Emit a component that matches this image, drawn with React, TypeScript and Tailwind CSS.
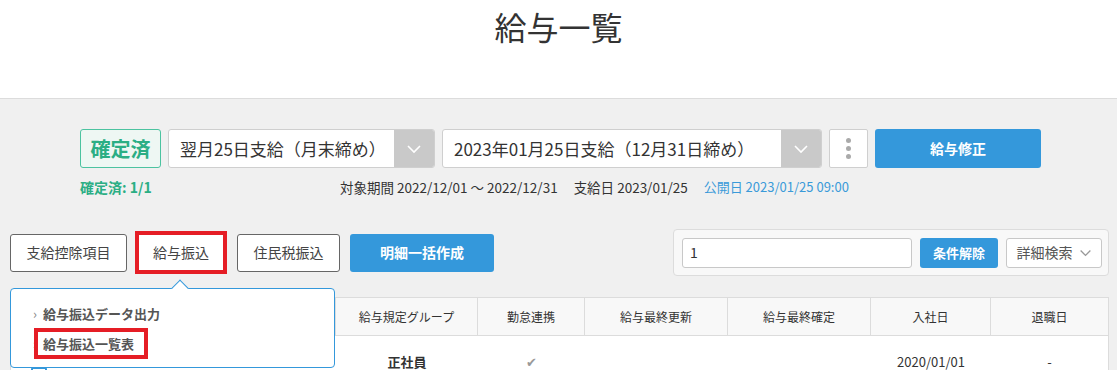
import React from 'react';

const font = { fontFamily: '"Noto Sans CJK JP", "Noto Sans", sans-serif' };

const Chevron = ({ className = '' }: { className?: string }) => (
  <svg width="16" height="10" viewBox="0 0 16 10" className={className}>
    <path d="M2 2 L8 8 L14 2" fill="none" stroke="currentColor" strokeWidth="1.6" />
  </svg>
);

const SelectBox = ({ label, width }: { label: string; width: string }) => (
  <div className={`flex h-[39px] ${width} bg-white border border-[#cfcfcf] rounded-[3px] overflow-hidden`}>
    <div className="flex-1 flex items-center pl-[11px] text-[17px] text-[#333] whitespace-nowrap">{label}</div>
    <div className="w-[40px] bg-[#c9c9c9] flex items-center justify-center text-white">
      <Chevron />
    </div>
  </div>
);

const columns = [
  { label: '', w: 'w-[325px]' },
  { label: '給与規定グループ', w: 'w-[142px]' },
  { label: '勤怠連携', w: 'w-[107px]' },
  { label: '給与最終更新', w: 'w-[143px]' },
  { label: '給与最終確定', w: 'w-[143px]' },
  { label: '入社日', w: 'w-[120px]' },
  { label: '退職日', w: 'flex-1' },
];

const rowValues = ['', '正社員', '✔', '', '', '2020/01/01', '-'];

export default function App() {
  return (
    <div className="w-[1117px] h-[370px] overflow-hidden bg-[#f0f0f0] text-[#333]" style={font}>
      {/* Header */}
      <div className="h-[99px] bg-white border-b border-[#dcdcdc] flex justify-center pt-[4px]">
        <h1 className="text-[32px] leading-[44px] font-normal text-[#333]">給与一覧</h1>
      </div>

      {/* Status row */}
      <div className="w-[961px] ml-[80px] mt-[30px]">
        <div className="flex items-center gap-[7px]">
          <div className="w-[81px] h-[39px] flex items-center justify-center bg-[#eef7f3] border border-[#4cc3a0] rounded-[3px] text-[#2bae84] text-[20px] font-bold">
            確定済
          </div>
          <SelectBox label="翌月25日支給（月末締め）" width="w-[267px]" />
          <SelectBox label="2023年01月25日支給（12月31日締め）" width="w-[380px]" />
          <div className="w-[39px] h-[39px] bg-white border border-[#cfcfcf] rounded-[2px] flex flex-col items-center justify-center gap-[3px]">
            <span className="w-[5px] h-[5px] rounded-full bg-[#aaa]" />
            <span className="w-[5px] h-[5px] rounded-full bg-[#aaa]" />
            <span className="w-[5px] h-[5px] rounded-full bg-[#aaa]" />
          </div>
          <button className="w-[166px] h-[39px] bg-[#3498db] rounded-[3px] text-white text-[14px] font-bold">
            給与修正
          </button>
        </div>
        <div className="flex items-center mt-[9px] leading-[20px]">
          <div className="w-[260px] text-[14px] text-[#2bae84] font-bold">確定済: 1/1</div>
          <div className="flex items-center gap-[16px] text-[13.5px] text-[#333]">
            <span>対象期間 2022/12/01 〜 2022/12/31</span>
            <span>支給日 2023/01/25</span>
            <span className="text-[13px] text-[#3a9ad9]">公開日 2023/01/25 09:00</span>
          </div>
        </div>
      </div>

      {/* Actions row */}
      <div className="relative flex items-center justify-between pl-[10px] pr-[8px] mt-[32px]">
        <div className="flex items-center">
          <button className="w-[117px] h-[38px] bg-white border border-[#666] rounded-[3px] text-[14px] text-[#444]">
            支給控除項目
          </button>
          <button className="ml-[8px] w-[92px] h-[43px] bg-white border-[4px] border-[#e51d25] text-[14px] text-[#444]">
            給与振込
          </button>
          <button className="ml-[10px] w-[103px] h-[38px] bg-white border border-[#666] rounded-[3px] text-[14px] text-[#444]">
            住民税振込
          </button>
          <button className="ml-[10px] w-[144px] h-[38px] bg-[#3498db] rounded-[3px] text-[14px] font-bold text-white">
            明細一括作成
          </button>
        </div>
        <div className="w-[436px] h-[47px] bg-[#f8f8f8] border border-[#dcdcdc] rounded-[4px] flex items-center pl-[8px] gap-[8px]">
          <div className="w-[230px] h-[30px] bg-white border border-[#c8c8c8] rounded-[3px] flex items-center px-[7px] text-[14px] text-[#333]">
            1
          </div>
          <button className="w-[78px] h-[30px] bg-[#3498db] rounded-[3px] text-white text-[13px] font-bold">
            条件解除
          </button>
          <button className="w-[96px] h-[30px] bg-white border border-[#c8c8c8] rounded-[3px] flex items-center justify-center gap-[6px] text-[14px] text-[#555]">
            詳細検索
            <Chevron className="text-[#999] w-[13px]" />
          </button>
        </div>

        {/* Dropdown popup */}
        <div className="absolute left-[10px] top-[59px] z-10 w-[325px] h-[80px] bg-white border border-[#3498db] rounded-[4px] pt-[14px] pl-[22px]">
          <div className="absolute -top-[7px] left-[163px] w-[12px] h-[12px] bg-white border-l border-t border-[#3498db] rotate-45" />
          <div className="flex items-center gap-[6px] text-[13px] font-bold text-[#555] leading-[22px]">
            <span className="text-[#888] font-normal">›</span>
            <span>給与振込データ出力</span>
          </div>
          <div className="flex items-center gap-[6px] text-[13px] font-bold text-[#555] leading-[22px] mt-[8px]">
            <span className="text-[#888] font-normal">›</span>
            <span className="relative">
              <span className="absolute -left-[9px] -right-[14px] -top-[5px] -bottom-[4px] border-[4px] border-[#e51d25]" />
              <span className="relative">給与振込一覧表</span>
            </span>
          </div>
        </div>
      </div>

      {/* Table */}
      <div className="ml-[10px] mr-[8px] mt-[21px] border border-[#dcdcdc] bg-white">
        <div className="flex h-[38px] bg-[#f8f8f8] border-b border-[#dcdcdc]">
          {columns.map((c, i) => (
            <div
              key={i}
              className={`${c.w} flex items-center justify-center text-[12px] text-[#333] ${i < columns.length - 1 ? 'border-r border-[#dcdcdc]' : ''}`}
            >
              {c.label}
            </div>
          ))}
        </div>
        <div className="flex h-[52px]">
          {columns.map((c, i) => (
            <div
              key={i}
              className={`${c.w} flex items-center justify-center text-[13px] ${i === 1 ? 'font-bold text-[#333]' : i === 2 ? 'text-[#999]' : 'text-[#333]'}`}
            >
              {i === 0 ? (
                <span className="ml-[-270px] w-[16px] h-[16px] border-2 border-[#3498db] rounded-[2px] mt-[26px]" />
              ) : (
                rowValues[i]
              )}
            </div>
          ))}
        </div>
      </div>
    </div>
  );
}
